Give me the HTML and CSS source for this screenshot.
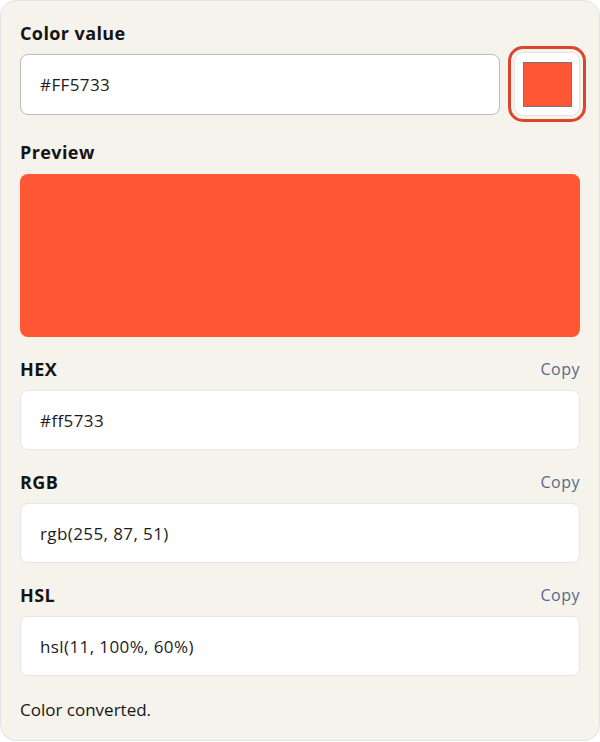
FILE: index.html
```html
<!DOCTYPE html>
<html lang="en">
<head>
<meta charset="utf-8">
<title>Color converter</title>
<link rel="stylesheet" href="styles.css">
</head>
<body>
<main class="card">
  <label class="label" for="color-value">Color value</label>
  <div class="input-row">
    <input id="color-value" class="text-input" type="text" value="#FF5733">
    <button class="swatch-btn" type="button" aria-label="Pick color"><span class="swatch"></span></button>
  </div>

  <div class="label label-preview">Preview</div>
  <div class="preview"></div>

  <section class="field">
    <div class="field-head"><span class="label">HEX</span><button class="copy" type="button">Copy</button></div>
    <div class="output">#ff5733</div>
  </section>

  <section class="field">
    <div class="field-head"><span class="label">RGB</span><button class="copy" type="button">Copy</button></div>
    <div class="output">rgb(255, 87, 51)</div>
  </section>

  <section class="field">
    <div class="field-head"><span class="label">HSL</span><button class="copy" type="button">Copy</button></div>
    <div class="output">hsl(11, 100%, 60%)</div>
  </section>

  <p class="status">Color converted.</p>
</main>
</body>
</html>
```

FILE: styles.css
```css
* { box-sizing: border-box; }

html, body {
  margin: 0;
  padding: 0;
  background: #ffffff;
}

body {
  font-family: "Open Sans", "Noto Sans", "Liberation Sans", sans-serif;
  color: #161616;
}

.card {
  display: flex;
  flex-direction: column;
  width: 600px;
  min-height: 741px;
  background: #f6f3ed;
  border: 1px solid #e2e2e4;
  border-radius: 16px;
  padding: 20px 19px 16px;
}

.label {
  display: block;
  font-size: 18px;
  line-height: 24px;
  font-weight: 700;
  letter-spacing: 0.4px;
  color: #141414;
}

.input-row {
  display: flex;
  align-items: center;
  gap: 14px;
  height: 64px;
  margin-top: 7px;
}

.text-input {
  flex: 1;
  height: 61px;
  min-width: 0;
  border: 1px solid #bdbdbd;
  border-radius: 8px;
  background: #ffffff;
  padding: 0 19px;
  font-family: inherit;
  font-size: 17px;
  letter-spacing: 0.4px;
  color: #1c1c1c;
  outline: none;
}

.swatch-btn {
  display: flex;
  align-items: center;
  justify-content: center;
  width: 66px;
  height: 64px;
  padding: 0;
  background: #ffffff;
  border: 1px solid #e6e4df;
  border-radius: 9px;
  outline: 3px solid #e0432c;
  outline-offset: 3px;
}

.swatch {
  display: block;
  width: 49px;
  height: 45px;
  background: #ff5733;
  border: 1px solid #767676;
}

.label-preview {
  margin-top: 24px;
}

.preview {
  height: 163px;
  margin-top: 10px;
  background: #ff5733;
  border-radius: 8px;
}

.field {
  margin-top: 20px;
}

.field-head {
  display: flex;
  justify-content: space-between;
  align-items: center;
  height: 24px;
  margin-bottom: 9px;
}

.copy {
  padding: 0;
  border: 0;
  background: none;
  font-family: inherit;
  font-size: 16px;
  letter-spacing: 0.5px;
  color: #56698a;
  cursor: pointer;
}

.output {
  display: flex;
  align-items: center;
  height: 60px;
  padding: 0 19px;
  background: #ffffff;
  border: 1px solid #e5e6ea;
  border-radius: 8px;
  font-size: 17px;
  letter-spacing: 0.4px;
  color: #1c1c1c;
}

.status {
  margin: 22px 0 0;
  font-size: 17px;
  line-height: 24px;
  color: #161616;
}
```
